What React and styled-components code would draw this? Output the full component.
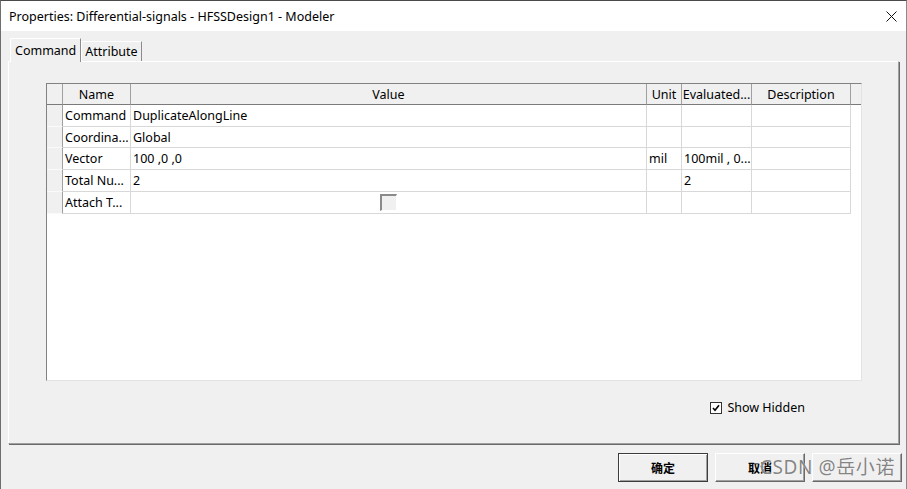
import React from 'react';
import styled, { createGlobalStyle } from 'styled-components';

const Global = createGlobalStyle`
  html, body { margin: 0; padding: 0; background: #f0f0f0; }
  body { font-family: "Noto Sans", "Noto Sans CJK SC", sans-serif; font-size: 12px; color: #000; }
  * { box-sizing: border-box; }
`;

const Window = styled.div`
  position: relative;
  width: 907px;
  height: 489px;
  display: flex;
  flex-direction: column;
  background: #f0f0f0;
  border-top: 1px solid #4a4a4a;
  border-left: 1px solid #6f6f6f;
  border-right: 1px solid #8a8a8a;
  overflow: hidden;
`;

const TitleBar = styled.div`
  height: 30px;
  flex: none;
  background: #fff;
  display: flex;
  align-items: center;
  justify-content: space-between;
  padding: 0 9px 0 8px;
  font-size: 12.5px;
`;

const CloseBox = styled.div`
  width: 12px;
  height: 12px;
  display: flex;
  align-items: center;
  justify-content: center;
`;

const Body = styled.div`
  flex: none;
  padding: 7px 6px 0 7px;
`;

const TabStrip = styled.div`
  display: flex;
  align-items: flex-end;
  height: 23px;
  padding-left: 2px;
  position: relative;
  z-index: 1;
`;

const Tab = styled.div`
  height: ${p => (p.$active ? '24px' : '20px')};
  margin-bottom: ${p => (p.$active ? '-1px' : '0')};
  padding: 0 ${p => (p.$active ? '4px' : '3px')};
  display: flex;
  align-items: center;
  background: #f0f0f0;
  border-top: 1px solid #fff;
  border-left: 1px solid #fff;
  border-right: 1px solid #8c8c8c;
  font-size: 12.5px;
`;

const Panel = styled.div`
  height: 383px;
  width: 891px;
  border-top: 1px solid #fff;
  border-left: 1px solid #fff;
  border-right: 1px solid #a0a0a0;
  border-bottom: 1px solid #a0a0a0;
  box-shadow: 1px 1px 0 #6a6a6a;
  padding: 21px 0 0 37px;
  display: flex;
  flex-direction: column;
`;

const GridFrame = styled.div`
  width: 816px;
  height: 298px;
  background: #fff;
  border-top: 1px solid #828282;
  border-left: 1px solid #828282;
  border-right: 1px solid #e3e3e3;
  border-bottom: 1px solid #e3e3e3;
`;

const COLS = '16px 68px 516px 35px 70px 99px';

const HeaderRow = styled.div`
  display: grid;
  grid-template-columns: ${COLS} 10px;
  height: 21px;
`;

const HeadCell = styled.div`
  background: #f0f0f0;
  border-right: ${p => (p.$last ? 'none' : '1px solid #a0a0a0')};
  border-bottom: 1px solid #7a7a7a;
  display: flex;
  align-items: center;
  justify-content: center;
  white-space: nowrap;
  overflow: hidden;
  font-size: 12.5px;
`;

const Row = styled.div`
  display: grid;
  grid-template-columns: ${COLS};
  width: 804px;
  height: ${p => p.$h}px;
`;

const RowHead = styled.div`
  background: #f0f0f0;
  border-right: 1px solid #a0a0a0;
  border-bottom: 1px solid #fafafa;
`;

const Cell = styled.div`
  border-right: 1px solid #d8d8d8;
  border-bottom: 1px solid #d8d8d8;
  display: flex;
  align-items: center;
  justify-content: ${p => (p.$center ? 'center' : 'flex-start')};
  padding-left: ${p => (p.$center ? '0' : '2px')};
  white-space: nowrap;
  overflow: hidden;
  font-size: 12.5px;
`;

const SunkenBox = styled.div`
  width: 17px;
  height: 17px;
  background: #f0f0f0;
  border-top: 2px solid #8a8a8a;
  border-left: 2px solid #8a8a8a;
  border-right: 1px solid #fff;
  border-bottom: 1px solid #fff;
`;

const OptionRow = styled.div`
  display: flex;
  justify-content: flex-end;
  align-items: center;
  gap: 5px;
  margin-top: 18px;
  padding-right: 93px;
  font-size: 12.5px;
`;

const CheckBox = styled.div`
  width: 12px;
  height: 12px;
  background: #fff;
  border: 1px solid #333;
  display: flex;
  align-items: center;
  justify-content: center;
`;

const ButtonBar = styled.div`
  display: flex;
  justify-content: flex-end;
  gap: 7px;
  padding: 9px 0 0 0;
  margin-right: -2px;
`;

const Button = styled.div`
  width: 90px;
  height: 29px;
  display: flex;
  align-items: center;
  justify-content: center;
  background: #f0f0f0;
  font-family: "Noto Sans CJK SC", sans-serif;
  font-size: 12px;
  font-weight: 700;
  border: 1px solid;
  border-color: ${p => (p.$default ? '#3c3c3c' : '#fff #696969 #696969 #fff')};
  box-shadow: ${p =>
    p.$default
      ? 'inset 1px 1px 0 #fff, inset -1px -1px 0 #a0a0a0'
      : 'inset -1px -1px 0 #a0a0a0'};
`;

const Watermark = styled.div`
  position: absolute;
  right: 11px;
  bottom: 9px;
  font-family: "Noto Sans", "Noto Sans CJK SC", sans-serif;
  font-size: 19px;
  color: rgba(110, 110, 110, 0.85);
  text-shadow: 0 0 1px #fff;
  letter-spacing: 0.6px;
  pointer-events: none;
`;

const headers = ['', 'Name', 'Value', 'Unit', 'Evaluated...', 'Description'];

const rows = [
  { h: 22, name: 'Command', value: 'DuplicateAlongLine', unit: '', ev: '' },
  { h: 21, name: 'Coordina...', value: 'Global', unit: '', ev: '' },
  { h: 22, name: 'Vector', value: '100 ,0 ,0', unit: 'mil', ev: '100mil , 0...' },
  { h: 22, name: 'Total Nu...', value: '2', unit: '', ev: '2' },
  { h: 22, name: 'Attach T...', check: true, unit: '', ev: '' },
];

export default function App() {
  return (
    <>
      <Global />
      <Window>
        <TitleBar>
          <span>Properties: Differential-signals - HFSSDesign1 - Modeler</span>
          <CloseBox>
            <svg width="11" height="11" viewBox="0 0 11 11">
              <path d="M0.5 0.5 L10.5 10.5 M10.5 0.5 L0.5 10.5" stroke="#111" strokeWidth="1" fill="none" />
            </svg>
          </CloseBox>
        </TitleBar>
        <Body>
          <TabStrip>
            <Tab $active>Command</Tab>
            <Tab>Attribute</Tab>
          </TabStrip>
          <Panel>
            <GridFrame>
              <HeaderRow>
                {headers.map((h, i) => (
                  <HeadCell key={i}>{h}</HeadCell>
                ))}
                <HeadCell $last />
              </HeaderRow>
              {rows.map((r, i) => (
                <Row key={i} $h={r.h}>
                  <RowHead />
                  <Cell>{r.name}</Cell>
                  {r.check ? (
                    <Cell $center>
                      <SunkenBox />
                    </Cell>
                  ) : (
                    <Cell>{r.value}</Cell>
                  )}
                  <Cell>{r.unit}</Cell>
                  <Cell>{r.ev}</Cell>
                  <Cell />
                </Row>
              ))}
            </GridFrame>
            <OptionRow>
              <CheckBox>
                <svg width="8" height="8" viewBox="0 0 8 8">
                  <path d="M1 4 L3 6.3 L7 1.2" stroke="#000" strokeWidth="1.6" fill="none" />
                </svg>
              </CheckBox>
              <span>Show Hidden</span>
            </OptionRow>
          </Panel>
          <ButtonBar>
            <Button $default>确定</Button>
            <Button>取消</Button>
            <Button />
          </ButtonBar>
        </Body>
        <Watermark>CSDN @岳小诺</Watermark>
      </Window>
    </>
  );
}
